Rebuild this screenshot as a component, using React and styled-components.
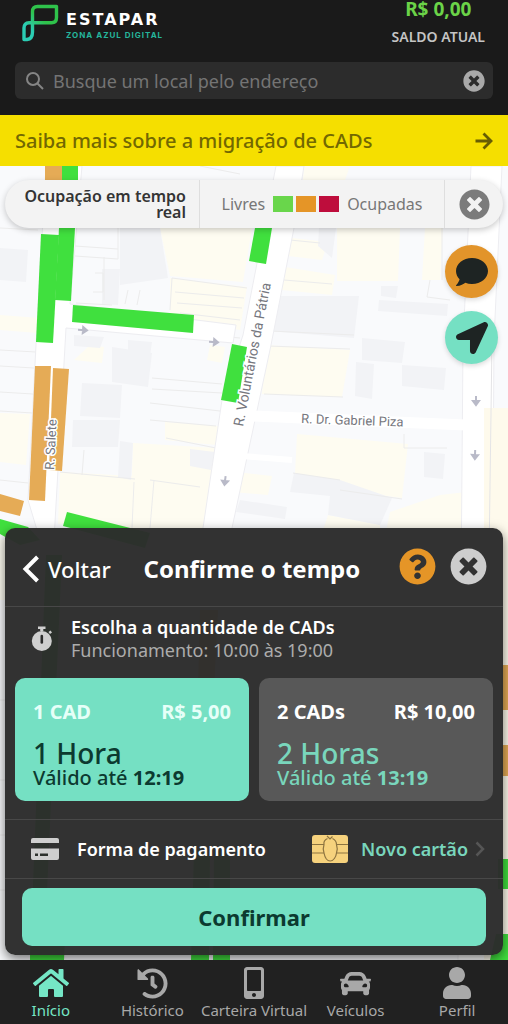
import React, { useState } from "react";
import styled, { createGlobalStyle } from "styled-components";
import {
    FaCar,
    FaComment,
    FaHistory,
    FaHome,
    FaLocationArrow,
    FaMobileAlt,
    FaQuestionCircle,
    FaTimesCircle,
    FaUser
} from "react-icons/fa";

const GlobalStyle = createGlobalStyle`
    * {
        box-sizing: border-box;
    }
    body {
        margin: 0;
        background-color: #1a1a1a;
        font-family: "Noto Sans", "Open Sans", sans-serif;
    }
    button, input {
        font-family: inherit;
    }
    button {
        padding: 0;
        border: none;
        background: none;
        color: inherit;
        text-align: inherit;
        cursor: pointer;
    }
    svg {
        display: block;
        flex-shrink: 0;
    }
`;

const Screen = styled.div`
    display: flex;
    flex-direction: column;
    min-height: 100vh;
`;

const Header = styled.header`
    height: 115px;
    padding: 0 15px;
    background-color: #1a1a1a;
`;

const TopRow = styled.div`
    display: flex;
    justify-content: space-between;
    height: 62px;
    padding: 0 8px 0 7px;
`;

const Brand = styled.div`
    display: flex;
    gap: 6px;
    padding-top: 4px;
`;

const BrandText = styled.div`
    padding-top: 7px;
`;

const BrandName = styled.div`
    color: #fff;
    font: 700 16px/18px "DejaVu Sans", sans-serif;
    letter-spacing: 2px;
`;

const BrandTag = styled.div`
    color: #25b59c;
    font: 700 8px/12px Inter, sans-serif;
    letter-spacing: 1px;
`;

const Balance = styled.div`
    text-align: center;
`;

const BalanceValue = styled.div`
    margin-top: -5px;
    color: #6bd348;
    font-size: 19px;
    font-weight: 700;
    line-height: 28px;
`;

const BalanceLabel = styled.div`
    color: #c4c4c4;
    font-size: 14px;
    font-weight: 600;
    line-height: 28px;
`;

const Search = styled.label`
    display: flex;
    align-items: center;
    gap: 8px;
    height: 37px;
    padding: 0 8px 0 10px;
    border-radius: 6px;
    background-color: #2c2c2c;
`;

const SearchInput = styled.input`
    flex: 1;
    min-width: 0;
    padding: 0;
    border: none;
    outline: none;
    background: none;
    color: #ddd;
    font-size: 18px;
    &::placeholder {
        color: #747474;
        opacity: 1;
    }
`;

const ClearButton = styled.button`
    color: #a9a9a9;
`;

const Banner = styled.a`
    display: flex;
    align-items: center;
    justify-content: space-between;
    height: 51px;
    padding: 0 15px;
    background-color: #f5df00;
    color: #726802;
    font-size: 20px;
    font-weight: 500;
    text-decoration: none;
`;

const MapArea = styled.main`
    position: relative;
    display: flex;
    flex: 1;
    flex-direction: column;
    padding: 14px 5px 5px;
    overflow: hidden;
`;

const MapCanvas = styled.svg`
    position: absolute;
    top: 0;
    left: 0;
    width: 100%;
    height: 100%;
`;

const Legend = styled.section`
    position: relative;
    display: flex;
    height: 48px;
    border-radius: 24px;
    background-color: #f3f3f3;
    box-shadow: 0 2px 6px rgba(0, 0, 0, 0.22);
`;

const LegendTitle = styled.div`
    display: flex;
    align-items: center;
    justify-content: flex-end;
    flex: 0 0 195px;
    padding: 0 13px 0 16px;
    border-right: 1px solid #dedede;
    color: #343434;
    font-size: 16px;
    font-weight: 600;
    line-height: 16px;
    text-align: right;
`;

const LegendScale = styled.div`
    display: flex;
    align-items: center;
    justify-content: center;
    flex: 1;
    gap: 8px;
    color: #777;
    font-size: 16px;
`;

const Swatches = styled.div`
    display: flex;
    gap: 3px;
`;

const Swatch = styled.span`
    width: 20px;
    height: 16px;
    background-color: ${props => props.$color};
`;

const LegendClose = styled.button`
    display: flex;
    align-items: center;
    justify-content: center;
    flex: 0 0 59px;
    border-left: 1px solid #dedede;
    color: #7b7b7b;
`;

const Fabs = styled.div`
    position: relative;
    display: flex;
    flex-direction: column;
    align-self: flex-end;
    gap: 13px;
    padding: 17px 5px 0 0;
`;

const Fab = styled.button`
    display: flex;
    align-items: center;
    justify-content: center;
    width: 53px;
    height: 53px;
    border-radius: 50%;
    background-color: ${props => props.$color};
    color: #1e2423;
    box-shadow: 0 2px 5px rgba(0, 0, 0, 0.15);
`;

const Panel = styled.section`
    position: relative;
    margin-top: auto;
    border-radius: 10px;
    background-color: rgba(43, 43, 43, 0.97);
    box-shadow: 0 4px 12px rgba(0, 0, 0, 0.55);
    color: #fff;
`;

const PanelHeader = styled.div`
    display: flex;
    align-items: center;
    height: 79px;
    padding: 0 16px 0 17px;
    border-bottom: 1px solid #484848;
`;

const BackButton = styled.button`
    display: flex;
    align-items: center;
    gap: 8px;
    padding-top: 4px;
    font-size: 22px;
    font-weight: 500;
    line-height: 30px;
`;

const PanelTitle = styled.h1`
    flex: 1;
    margin: 0;
    padding: 4px 6px 0 0;
    font-size: 24px;
    font-weight: 700;
    line-height: 30px;
    text-align: center;
`;

const PanelActions = styled.div`
    display: flex;
    gap: 14px;
    padding-bottom: 2px;
`;

const RoundButton = styled.button`
    color: ${props => props.$color};
`;

const Info = styled.div`
    display: flex;
    align-items: center;
    gap: 18px;
    height: 71px;
    padding: 0 26px 8px;
`;

const InfoTitle = styled.div`
    color: #fff;
    font-size: 18px;
    font-weight: 600;
    line-height: 23px;
`;

const InfoText = styled.div`
    color: #acacac;
    font-size: 18px;
    line-height: 23px;
`;

const Options = styled.div`
    display: grid;
    grid-template-columns: 1fr 1fr;
    gap: 10px;
    padding: 0 10px 18px;
    border-bottom: 1px solid #484848;
`;

const Option = styled.button`
    display: flex;
    flex-direction: column;
    height: 123px;
    padding: 20px 18px 0;
    border-radius: 10px;
    background-color: ${props => (props.$selected ? "#75e0c3" : "#585858")};
    color: ${props => (props.$selected ? "#0c3a30" : "#79d6bc")};
    font-weight: 500;
`;

const OptionTop = styled.div`
    display: flex;
    align-self: stretch;
    justify-content: space-between;
    margin-bottom: 13px;
    color: ${props => (props.$selected ? "#e6fff8" : "#fff")};
    font-size: 20px;
    font-weight: 700;
    line-height: 28px;
    white-space: nowrap;
`;

const OptionHours = styled.div`
    font-size: 28px;
    line-height: 28px;
`;

const OptionUntil = styled.div`
    font-size: 20px;
    line-height: 22px;
    white-space: nowrap;
`;

const Payment = styled.button`
    display: flex;
    align-items: center;
    width: 100%;
    height: 59px;
    padding: 0 18px 0 26px;
    border-bottom: 1px solid #484848;
    font-size: 18px;
    font-weight: 600;
`;

const PaymentLabel = styled.span`
    flex: 1;
    padding-left: 18px;
`;

const PaymentValue = styled.span`
    padding: 0 7px 0 13px;
    color: #79d6bc;
`;

const ConfirmArea = styled.div`
    padding: 9px 17px;
`;

const Confirm = styled.button`
    width: 100%;
    height: 58px;
    border-radius: 10px;
    background-color: #75e0c3;
    color: #0c3a30;
    font-size: 22px;
    font-weight: 700;
    text-align: center;
`;

const Nav = styled.nav`
    display: grid;
    grid-template-columns: repeat(5, 1fr);
    height: 64px;
    background-color: #212121;
`;

const NavItem = styled.a`
    display: flex;
    flex-direction: column;
    align-items: center;
    min-width: 0;
    padding-top: 6px;
    color: ${props => (props.$active ? "#75e6c6" : "#a8a8a8")};
    font-size: 15px;
    line-height: 20px;
    text-decoration: none;
    white-space: nowrap;
`;

const NavIcon = styled.span`
    display: flex;
    align-items: center;
    height: 34px;
`;

const Logo = () => (
    <svg width="38" height="38" viewBox="0 0 38 38" fill="none" strokeWidth="3.4" strokeLinejoin="round">
        <defs>
            <linearGradient id="logo" x1="18" y1="14" x2="8" y2="25" gradientUnits="userSpaceOnUse">
                <stop offset="0" stopColor="#2fc24b" />
                <stop offset="1" stopColor="#2bcdb4" />
            </linearGradient>
        </defs>
        <path
            stroke="url(#logo)"
            d="M10.500 28 V7.500 Q10.500 2.500 15.500 2.500 H34.500 V13.500 Q34.500 18.800 29.500 18.800 H7 Q2 18.800 2 24 V35.500 H5 Q10.500 35 10.500 28"
        />
    </svg>
);

const SearchIcon = () => (
    <svg width="20" height="20" viewBox="0 0 20 20" fill="none" stroke="#858585" strokeWidth="2">
        <circle cx="8" cy="8" r="6" />
        <path d="M12.500 12.500 L18 18" />
    </svg>
);

const ArrowRight = () => (
    <svg width="18" height="18" viewBox="0 0 18 18" fill="none" stroke="#665d03" strokeWidth="2.8">
        <path d="M0.500 9 H16 M8.500 1.500 L16 9 L8.500 16.500" />
    </svg>
);

const ChevronLeft = () => (
    <svg width="18" height="28" viewBox="0 0 18 28" fill="none" stroke="#fff" strokeWidth="4">
        <path d="M15.500 2 L3.500 14 L15.500 26" />
    </svg>
);

const ChevronRight = () => (
    <svg width="10" height="16" viewBox="0 0 10 16" fill="none" stroke="#565656" strokeWidth="2.5">
        <path d="M1.500 1.500 L8 8 L1.500 14.500" />
    </svg>
);

const StopwatchIcon = () => (
    <svg width="22" height="26" viewBox="0 0 22 26" fill="#cfcfcf">
        <path d="M7 0.500H14.500V3H12.300V5H9.200V3H7Z" />
        <path d="M17.500 6 L19.500 4.500 L21 6.500 L19 8Z" />
        <circle cx="10.800" cy="15" r="10" />
        <path d="M10.800 10V16.500" stroke="#2c2c2c" strokeWidth="2.6" strokeLinecap="round" />
    </svg>
);

const CardIcon = () => (
    <svg width="28" height="22" viewBox="0 0 28 22" fill="#cfcfcf">
        <path d="M2 0H26Q28 0 28 2V5H0V2Q0 0 2 0Z" />
        <path
            fillRule="evenodd"
            d="M0 10.500H28V20Q28 22 26 22H2Q0 22 0 20ZM4 15.500V18H7V15.500ZM9 15.500V18H17V15.500Z"
        />
    </svg>
);

const ChipIcon = () => (
    <svg width="36" height="28" viewBox="0 0 36 28" fill="none" stroke="#8d7440" strokeWidth="1.2">
        <rect width="36" height="28" rx="3" fill="#f6d27d" stroke="none" />
        <path d="M0 9.500H12M0 18H12M36 9.500H24.500M36 18H24.500" />
        <path d="M15 1 L18 4 L20.500 1.500 M15.500 3.500 C12.500 5 11.500 7 12 9.500 Q10.500 14 12 18 C13 23 15.500 26 18.200 26 C21.500 26 24 22 24.500 18 Q26 14 24.500 9.500 C24.500 7 22.500 4.500 20.500 3.500" />
    </svg>
);

const StreetArrow = ({ x, y, angle }) => (
    <path
        d="M-5 0 H2 M0 -3 L4 0 L0 3 Z"
        fill="#b9bac8"
        stroke="#b9bac8"
        strokeWidth="2"
        transform={`translate(${x} ${y}) rotate(${angle})`}
    />
);

const yards = [
    "160,228 252,228 243,282 170,276",
    "337,228 400,228 398,281 337,281",
    "170,278 247,287 240,330 170,318",
    "425,228 443,228 440,280 422,280",
    "0,315 40,318 38,333 0,330",
    "0,413 30,414 26,465 0,462",
    "133,443 218,448 204,528 130,528",
    "60,472 133,476 132,528 58,524",
    "297,434 408,444 402,498 340,490 295,474",
    "265,345 350,350 342,397 262,394",
    "484,408 508,408 508,680 484,680",
    "390,512 440,495 484,490 484,560 380,560",
    "236,472 272,476 268,495 232,492",
    "328,515 380,525 380,545 320,540",
    "292,238 328,242 322,260 288,256",
    "285,267 335,275 332,295 282,290",
    "90,345 104,347 102,363 74,360",
    "304,166 350,166 345,180 303,180",
    "210,345 225,347 222,363 207,360",
    "165,422 218,426 216,445 165,440",
    "0,540 30,540 26,600 0,600"
];

const buildings = [
    "0,248 28,250 26,282 0,280",
    "102,269 120,269 118,305 102,304",
    "120,228 160,228 168,278 120,285",
    "82,383 122,385 120,418 80,416",
    "73,420 120,420 118,447 72,447",
    "112,347 152,353 148,387 112,382",
    "120,441 133,443 131,480 118,477",
    "190,449 215,452 211,470 190,466",
    "274,296 359,296 354,338 270,331",
    "319,228 336,228 332,258 318,246",
    "381,286 398,286 396,298 381,296",
    "379,300 448,304 447,316 378,311",
    "362,338 405,342 402,363 362,360",
    "356,362 374,364 372,399 355,396",
    "402,365 446,368 444,390 402,386",
    "424,452 445,454 443,479 424,477",
    "294,473 340,480 392,498 380,525 328,515 330,496 290,492",
    "240,500 287,507 285,519 236,512",
    "74,335 104,337 100,348 74,346",
    "128,340 152,342 150,356 128,354"
];

const lots = [
    "M75 246 L118 249", "M75 256 L118 259", "M118 228 V259", "M104 257 V300", "M76 303 L112 305",
    "M95 273 H103 V292 H93", "M172 278 L247 288", "M172 278 L170 310", "M175 292 L244 298",
    "M177 303 L242 308", "M180 313 L240 320", "M197 334 L240 338", "M140 290 L137 305", "M128 290 L125 304",
    "M200 166 L240 174", "M152 378 L222 384", "M152 389 L222 393", "M150 403 L220 411", "M150 420 L216 426",
    "M166 438 L216 448", "M84 450 L82 475", "M60 472 L135 479", "M150 480 L200 487", "M154 480 L150 528",
    "M134 482 L132 528", "M290 240 L320 243", "M284 280 L332 284", "M270 331 L354 335", "M268 346 L350 349",
    "M264 394 L343 397", "M293 473 L340 480 M340 490 L402 499", "M404 434 V448 H447 M442 228 V280",
    "M430 280 L427 297 L450 300", "M0 366 L34 368", "M0 392 L33 394", "M0 411 L33 413", "M0 228 L38 230",
    "M0 350 L36 352", "M0 480 L28 483", "M0 700 H16", "M0 780 H16", "M0 835 H16", "M0 890 H16"
];

const zones = [
    { color: "#e5ab56", points: "45,166 62,166 62,182 45,182" },
    { color: "#e5ab56", points: "35,366 51,366 45,501 29,500" },
    { color: "#e5ab56", points: "53,368 69,369 62,471 49,470" },
    { color: "#e5ab56", points: "0,494 24,501 20,516 0,511" },
    { color: "#e5ab56", points: "501,665 508,665 508,710 501,710" },
    { color: "#e5ab56", points: "501,745 508,745 508,776 501,776" },
    { color: "#40e03e", points: "62,166 78,166 78,182 62,182" },
    { color: "#40e03e", points: "59,228 75,228 71,301 55,300" },
    { color: "#40e03e", points: "41,234 59,235 53,343 36,342" },
    { color: "#40e03e", points: "73,305 194,315 193,333 72,322" },
    { color: "#40e03e", points: "255,228 272,228 266,264 249,261" },
    { color: "#40e03e", points: "232,344 247,347 238,403 221,400" },
    { color: "#40e03e", points: "67,512 150,533 145,548 63,526" },
    { color: "#40e03e", points: "0,519 28,527 40,540 20,545 0,534" },
    { color: "#40e03e", points: "46,555 62,555 44,960 30,960" },
    { color: "#40e03e", points: "31,940 65,940 64,960 30,960" },
    { color: "#40e03e", points: "194,850 210,850 209,960 191,960" },
    { color: "#40e03e", points: "214,850 230,850 230,960 213,960" },
    { color: "#40e03e", points: "498,859 508,859 508,889 498,889" },
    { color: "#40e03e", points: "496,934 508,934 508,960 490,960" },
    { color: "#e5ab56", points: "200,610 218,610 214,690 198,690" }
];

const StreetMap = () => (
    <MapCanvas viewBox="0 166 508 794" preserveAspectRatio="xMidYMin slice" aria-hidden="true">
        <rect y="166" width="508" height="794" fill="#f9fafc" />
        {yards.map(points => <polygon key={points} points={points} fill="#fefcf1" />)}
        {buildings.map(points => <polygon key={points} points={points} fill="#f2f3f6" />)}
        <path d={lots.join(" ")} fill="none" stroke="#ececec" strokeWidth="1" />
        <g fill="#fff" stroke="#ededf1" strokeWidth="1">
            <path d="M46 166 H82 L70 304 L236 325 L233 343 L66 328 L54 540 H40 L28 500 L36 345 Z" />
            <path d="M276 166 H304 L294 228 L271 345 L232 528 L215 600 H185 L203 528 L222 400 L243 335 Z" />
            <path d="M471 166 H502 L494 340 L490 960 H458 L463 345 Z" />
        </g>
        <path d="M252 416 L466 425" fill="none" stroke="#fff" strokeWidth="11" />
        <path d="M242 456 L292 460" fill="none" stroke="#fff" strokeWidth="6" />
        <path d="M484 960 V408 H508 V960 Z" fill="#fefaec" />
        <path d="M492 340 L489 560" fill="none" stroke="#e4e4e6" strokeWidth="1" />
        {zones.map(zone => <polygon key={zone.points} points={zone.points} fill={zone.color} />)}
        <StreetArrow x={83} y={330} angle={4} />
        <StreetArrow x={214} y={342} angle={4} />
        <StreetArrow x={225} y={481} angle={97} />
        <StreetArrow x={476} y={401} angle={90} />
        <StreetArrow x={475} y={455} angle={92} />
        <g
            fill="#76777e"
            stroke="#fff"
            strokeWidth="3"
            paintOrder="stroke"
            fontFamily="Roboto, sans-serif"
            fontSize="13"
        >
            <text transform="translate(54 470) rotate(-87)">R. Salete</text>
            <text transform="translate(243 427) rotate(-79)" fontSize="14">R. Voluntários da Pátria</text>
            <text x="301" y="423" transform="rotate(2 301 423)">R. Dr. Gabriel Piza</text>
        </g>
    </MapCanvas>
);

const options = [
    { id: 1, name: "1 CAD", price: "R$ 5,00", hours: "1 Hora", until: "12:19" },
    { id: 2, name: "2 CADs", price: "R$ 10,00", hours: "2 Horas", until: "13:19" }
];

const tabs = [
    { name: "Início", icon: <FaHome size={36} />, active: true },
    { name: "Histórico", icon: <FaHistory size={31} /> },
    { name: "Carteira Virtual", icon: <FaMobileAlt size={32} /> },
    { name: "Veículos", icon: <FaCar size={31} /> },
    { name: "Perfil", icon: <FaUser size={32} /> }
];

const App = () => {
    const [selected, setSelected] = useState(1);

    return (
        <Screen>
            <GlobalStyle />
            <Header>
                <TopRow>
                    <Brand>
                        <Logo />
                        <BrandText>
                            <BrandName>ESTAPAR</BrandName>
                            <BrandTag>ZONA AZUL DIGITAL</BrandTag>
                        </BrandText>
                    </Brand>
                    <Balance>
                        <BalanceValue>R$ 0,00</BalanceValue>
                        <BalanceLabel>SALDO ATUAL</BalanceLabel>
                    </Balance>
                </TopRow>
                <Search>
                    <SearchIcon />
                    <SearchInput type="text" placeholder="Busque um local pelo endereço" />
                    <ClearButton type="button" aria-label="Limpar">
                        <FaTimesCircle size={22} />
                    </ClearButton>
                </Search>
            </Header>
            <Banner href="#cads">
                Saiba mais sobre a migração de CADs
                <ArrowRight />
            </Banner>
            <MapArea>
                <StreetMap />
                <Legend>
                    <LegendTitle>Ocupação em tempo real</LegendTitle>
                    <LegendScale>
                        Livres
                        <Swatches>
                            <Swatch $color="#69d64b" />
                            <Swatch $color="#e59527" />
                            <Swatch $color="#be0d3c" />
                        </Swatches>
                        Ocupadas
                    </LegendScale>
                    <LegendClose type="button" aria-label="Fechar legenda">
                        <FaTimesCircle size={31} />
                    </LegendClose>
                </Legend>
                <Fabs>
                    <Fab type="button" aria-label="Ajuda" $color="#e2942a">
                        <FaComment size={32} />
                    </Fab>
                    <Fab type="button" aria-label="Minha localização" $color="#75e0c3">
                        <FaLocationArrow size={32} />
                    </Fab>
                </Fabs>
                <Panel>
                    <PanelHeader>
                        <BackButton type="button">
                            <ChevronLeft />
                            Voltar
                        </BackButton>
                        <PanelTitle>Confirme o tempo</PanelTitle>
                        <PanelActions>
                            <RoundButton type="button" aria-label="Dúvidas" $color="#e59527">
                                <FaQuestionCircle size={37} />
                            </RoundButton>
                            <RoundButton type="button" aria-label="Fechar" $color="#cdcdcd">
                                <FaTimesCircle size={37} />
                            </RoundButton>
                        </PanelActions>
                    </PanelHeader>
                    <Info>
                        <StopwatchIcon />
                        <div>
                            <InfoTitle>Escolha a quantidade de CADs</InfoTitle>
                            <InfoText>Funcionamento: 10:00 às 19:00</InfoText>
                        </div>
                    </Info>
                    <Options>
                        {options.map(option => (
                            <Option
                                key={option.id}
                                type="button"
                                aria-pressed={selected === option.id}
                                $selected={selected === option.id}
                                onClick={() => setSelected(option.id)}
                            >
                                <OptionTop $selected={selected === option.id}>
                                    <span>{option.name}</span>
                                    <span>{option.price}</span>
                                </OptionTop>
                                <OptionHours>{option.hours}</OptionHours>
                                <OptionUntil>Válido até <b>{option.until}</b></OptionUntil>
                            </Option>
                        ))}
                    </Options>
                    <Payment type="button">
                        <CardIcon />
                        <PaymentLabel>Forma de pagamento</PaymentLabel>
                        <ChipIcon />
                        <PaymentValue>Novo cartão</PaymentValue>
                        <ChevronRight />
                    </Payment>
                    <ConfirmArea>
                        <Confirm type="button">Confirmar</Confirm>
                    </ConfirmArea>
                </Panel>
            </MapArea>
            <Nav>
                {tabs.map(tab => (
                    <NavItem key={tab.name} href="#" $active={tab.active}>
                        <NavIcon>{tab.icon}</NavIcon>
                        {tab.name}
                    </NavItem>
                ))}
            </Nav>
        </Screen>
    );
};

export default App;
